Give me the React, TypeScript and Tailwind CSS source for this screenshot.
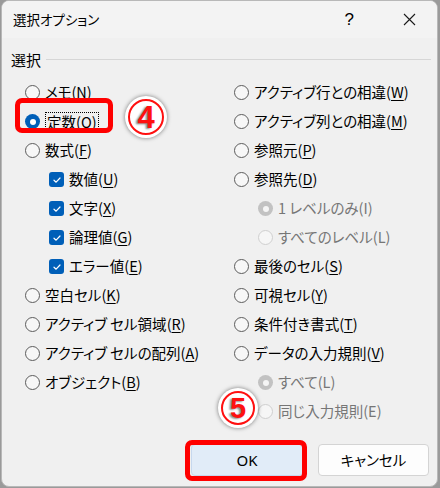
import React from "react";

type RState = "off" | "on" | "doff" | "don";

function Radio({ s }: { s: RState }) {
  if (s === "on")
    return (
      <span className="flex items-center justify-center w-[15px] h-[15px] rounded-full bg-[#005fb8] shrink-0">
        <span className="w-[6px] h-[6px] rounded-full bg-white" />
      </span>
    );
  if (s === "don")
    return (
      <span className="flex items-center justify-center w-[15px] h-[15px] rounded-full bg-[#c2c2c2] shrink-0">
        <span className="w-[6px] h-[6px] rounded-full bg-[#f5f5f5]" />
      </span>
    );
  if (s === "doff")
    return <span className="w-[15px] h-[15px] rounded-full border border-[#cfcfcf] bg-[#f6f6f6] shrink-0" />;
  return <span className="w-[15px] h-[15px] rounded-full border border-[#5c5c5c] bg-[#f7f7f7] shrink-0" />;
}

function Check() {
  return (
    <span className="flex items-center justify-center w-[15px] h-[15px] rounded-[3px] bg-[#005fb8] shrink-0">
      <svg width="10" height="10" viewBox="0 0 10 10">
        <path d="M2 5.2 L4.1 7.2 L8 3" fill="none" stroke="white" strokeWidth="1.2" strokeLinecap="round" strokeLinejoin="round" />
      </svg>
    </span>
  );
}

type Item = {
  kind: "radio" | "check";
  s?: RState;
  pre: string;
  k: string;
  indent?: boolean;
  disabled?: boolean;
  focus?: boolean;
};

function Row({ it }: { it: Item }) {
  const label = (
    <span className={it.disabled ? "text-[#767676]" : "text-black"}>
      {it.pre}(
      {it.disabled ? it.k : <span className="underline underline-offset-[2px] decoration-1">{it.k}</span>})
    </span>
  );
  return (
    <div className={"flex items-center h-[29px] gap-[5px] " + (it.indent ? "pl-[24px]" : "")}>
      {it.kind === "radio" ? <Radio s={it.s || "off"} /> : <Check />}
      {it.focus ? (
        <span className="border border-dotted border-black px-[1px] leading-[17px]">{label}</span>
      ) : (
        label
      )}
    </div>
  );
}

const left: Item[] = [
  { kind: "radio", s: "off", pre: "メモ", k: "N" },
  { kind: "radio", s: "on", pre: "定数", k: "O", focus: true },
  { kind: "radio", s: "off", pre: "数式", k: "F" },
  { kind: "check", pre: "数値", k: "U", indent: true },
  { kind: "check", pre: "文字", k: "X", indent: true },
  { kind: "check", pre: "論理値", k: "G", indent: true },
  { kind: "check", pre: "エラー値", k: "E", indent: true },
  { kind: "radio", s: "off", pre: "空白セル", k: "K" },
  { kind: "radio", s: "off", pre: "アクティブ セル領域", k: "R" },
  { kind: "radio", s: "off", pre: "アクティブ セルの配列", k: "A" },
  { kind: "radio", s: "off", pre: "オブジェクト", k: "B" },
];

const right: Item[] = [
  { kind: "radio", s: "off", pre: "アクティブ行との相違", k: "W" },
  { kind: "radio", s: "off", pre: "アクティブ列との相違", k: "M" },
  { kind: "radio", s: "off", pre: "参照元", k: "P" },
  { kind: "radio", s: "off", pre: "参照先", k: "D" },
  { kind: "radio", s: "don", pre: "1 レベルのみ", k: "I", indent: true, disabled: true },
  { kind: "radio", s: "doff", pre: "すべてのレベル", k: "L", indent: true, disabled: true },
  { kind: "radio", s: "off", pre: "最後のセル", k: "S" },
  { kind: "radio", s: "off", pre: "可視セル", k: "Y" },
  { kind: "radio", s: "off", pre: "条件付き書式", k: "T" },
  { kind: "radio", s: "off", pre: "データの入力規則", k: "V" },
  { kind: "radio", s: "don", pre: "すべて", k: "L", indent: true, disabled: true },
  { kind: "radio", s: "doff", pre: "同じ入力規則", k: "E", indent: true, disabled: true },
];

export default function App() {
  return (
    <div className="relative w-[440px] h-[488px] bg-[#9a9a9a] overflow-hidden font-['Noto_Sans_CJK_JP','Noto_Sans',sans-serif] [font-feature-settings:'palt'] text-[14.5px] leading-none">
      <div className="ml-[1px] w-[437px] h-[487px] rounded-[8px] border border-[#b8b8b8] bg-[#f0f0f0] flex flex-col overflow-hidden">
        {/* title bar */}
        <div className="h-[37px] bg-[#f3f3f3] flex items-center pl-[11px] pr-[21px] shrink-0">
          <span className="text-[13.5px] text-black">選択オプション</span>
          <span className="ml-auto text-[17px] text-black font-['Liberation_Sans',sans-serif]">?</span>
          <svg className="ml-[49px]" width="13" height="13" viewBox="0 0 13 13">
            <path d="M1 1 L12 12 M12 1 L1 12" stroke="#1a1a1a" strokeWidth="1.1" />
          </svg>
        </div>
        {/* group header */}
        <div className="flex items-center h-[20px] mt-[11px] pl-[9px] pr-[6px]">
          <span className="text-[15px]">選択</span>
          <div className="flex-1 h-px bg-[#d6d6d6] ml-[5px]" />
        </div>
        {/* columns */}
        <div className="flex mt-[9px] pl-[23px]">
          <div className="w-[209px] flex flex-col">
            {left.map((it, i) => (
              <Row key={i} it={it} />
            ))}
          </div>
          <div className="flex-1 flex flex-col">
            {right.map((it, i) => (
              <Row key={i} it={it} />
            ))}
          </div>
        </div>
        {/* buttons */}
        <div className="flex justify-end gap-[15px] mt-[18px] pr-[8px]">
          <button className="w-[112px] h-[32px] rounded-[4px] bg-[#e1ecf8] border border-[#c6d8ee] text-[15px] text-black font-['Noto_Sans',sans-serif]">
            OK
          </button>
          <button className="w-[111px] h-[32px] rounded-[4px] bg-[#fdfdfd] border border-[#d4d4d4] text-[14.5px] text-black">
            キャンセル
          </button>
        </div>
      </div>

      {/* annotations */}
      <div className="absolute left-[15px] top-[98px] w-[98px] h-[35px] border-[5px] border-[#ff0000] rounded-[7px]" />
      <div className="absolute left-[185px] top-[440px] w-[122px] h-[41px] border-[5px] border-[#ff0000] rounded-[7px]" />

      <div className="absolute left-[125px] top-[96px] w-[42px] h-[42px] rounded-full bg-white shadow-[0_0_4px_rgba(0,0,0,0.5)] flex items-center justify-center">
        <div className="w-[36px] h-[36px] rounded-full border-2 border-[#ff1010] flex items-center justify-center">
          <span className="font-['Liberation_Sans',sans-serif] font-bold text-[31px] leading-none text-[#ff1010] [-webkit-text-stroke:1.2px_#ffffff] [paint-order:stroke_fill] [text-shadow:-2px_1px_2px_#8c8c8c]">
            4
          </span>
        </div>
      </div>
      <div className="absolute left-[218px] top-[388px] w-[40px] h-[40px] rounded-full bg-white shadow-[0_0_4px_rgba(0,0,0,0.5)] flex items-center justify-center">
        <div className="w-[34px] h-[34px] rounded-full border-2 border-[#ff1010] flex items-center justify-center">
          <span className="font-['Liberation_Sans',sans-serif] font-bold text-[29px] leading-none text-[#ff1010] [-webkit-text-stroke:1.2px_#ffffff] [paint-order:stroke_fill] [text-shadow:-2px_1px_2px_#8c8c8c]">
            5
          </span>
        </div>
      </div>
    </div>
  );
}
